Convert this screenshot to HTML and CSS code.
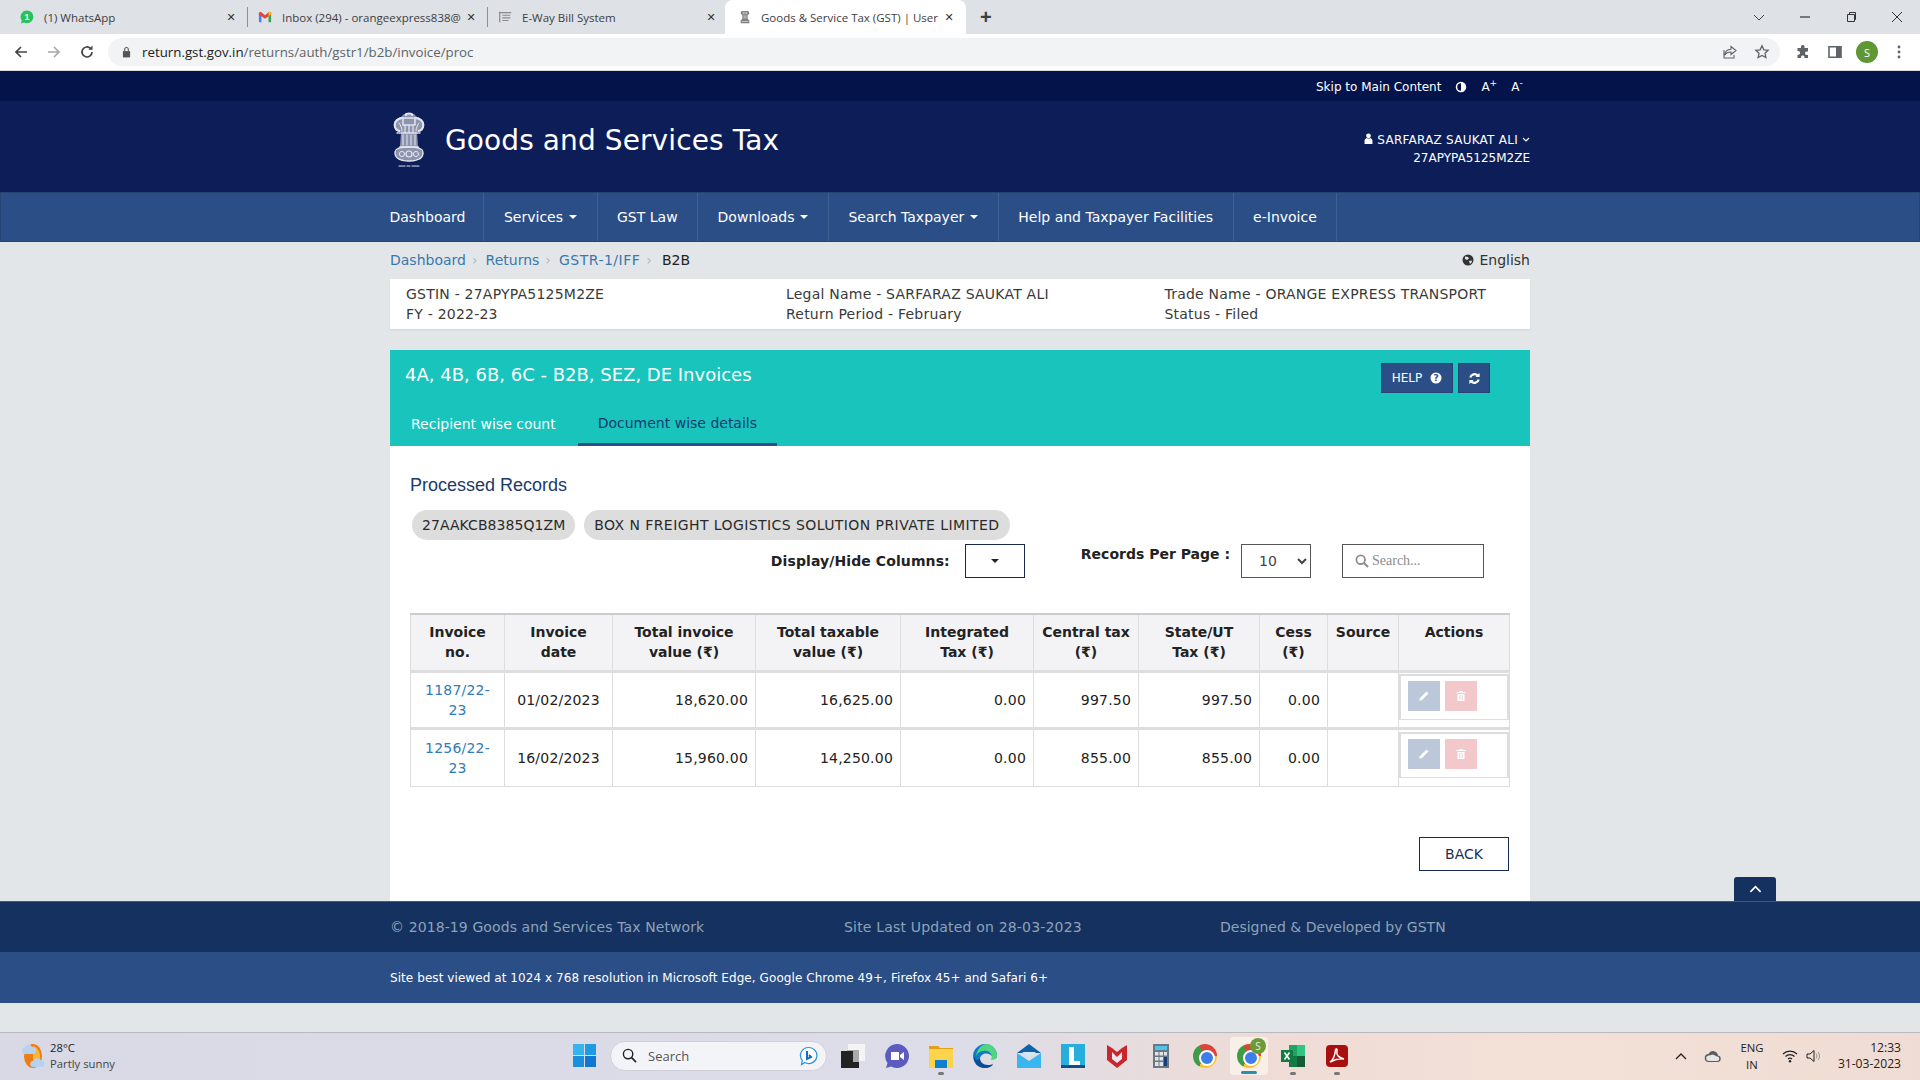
FILE: index.html
```html
<!DOCTYPE html>
<html lang="en">
<head>
<meta charset="utf-8">
<title>Goods &amp; Service Tax (GST) | User</title>
<link rel="stylesheet" href="styles.css">
</head>
<body>
<header class="tabstrip">
  <div class="tab tab-one">
    <svg class="fav" viewBox="0 0 16 16"><path fill="#25c45a" d="M8 .5a7.300 7.300 0 0 1 0 14.600c-1.300 0-2.400-.3-3.400-.8L1 15.500l1.100-3.400A7.300 7.300 0 0 1 8 .5z"/><text x="8" y="11.500" text-anchor="middle" class="fav-num">1</text></svg>
    <span class="tab-title">(1) WhatsApp</span><span class="tab-x">✕</span>
  </div>
  <i class="tab-sep"></i>
  <div class="tab">
    <svg class="fav" viewBox="0 0 16 16"><path fill="#4285f4" d="M1 3h3v11H2a1 1 0 0 1-1-1z"/><path fill="#34a853" d="M12 3h3v10a1 1 0 0 1-1 1h-2z"/><path fill="#ea4335" d="M1 3l2-1 5 4 5-4 2 1v2l-7 5-7-5z"/><path fill="#fbbc04" d="M13 2l2 1v2l-3 2V3z"/></svg>
    <span class="tab-title">Inbox (294) - orangeexpress838@</span><span class="tab-x">✕</span>
  </div>
  <i class="tab-sep"></i>
  <div class="tab">
    <svg class="fav" viewBox="0 0 16 16"><path stroke="#8a8a8a" stroke-width="1.400" d="M2 2v12M1 3h14M5 6h9M5 9h9M5 12h7" fill="none"/></svg>
    <span class="tab-title">E-Way Bill System</span><span class="tab-x">✕</span>
  </div>
  <div class="tab tab-active">
    <svg class="fav" viewBox="0 0 16 16"><path fill="#7d7d7d" d="M4 1h8l1 3-2 2v4l2 2v3H3v-3l2-2V6L3 4z"/><path stroke="#fff" stroke-width=".7" d="M6 2v3M8 2v3M10 2v3M7 6v4M9 6v4M4 13h8" fill="none"/></svg>
    <span class="tab-title">Goods &amp; Service Tax (GST) | User</span><span class="tab-x">✕</span>
  </div>
  <span class="newtab">+</span>
  <div class="winctl">
    <svg viewBox="0 0 12 12"><path d="M1 4l5 5 5-5" fill="none" stroke="#444" stroke-width="1"/></svg>
    <svg viewBox="0 0 12 12"><path d="M1 6h10" stroke="#333" stroke-width="1.200"/></svg>
    <svg viewBox="0 0 12 12"><path d="M2.500 3.500h7v7h-7zM4.500 3.500v-2h6v7h-1" fill="none" stroke="#333" stroke-width="1"/></svg>
    <svg viewBox="0 0 12 12"><path d="M1 1l10 10M11 1L1 11" stroke="#333" stroke-width="1"/></svg>
  </div>
</header>
<div class="toolbar">
  <svg class="nav-ico" viewBox="0 0 16 16"><path d="M14 8H3M8 3L3 8l5 5" fill="none" stroke="#444" stroke-width="1.700"/></svg>
  <svg class="nav-ico" viewBox="0 0 16 16"><path d="M2 8h11M8 3l5 5-5 5" fill="none" stroke="#a8a8a8" stroke-width="1.700"/></svg>
  <svg class="nav-ico" viewBox="0 0 16 16"><path d="M13 8a5 5 0 1 1-1.500-3.600" fill="none" stroke="#444" stroke-width="1.700"/><path d="M13.500 1.500v4.200H9.300z" fill="#444"/></svg>
  <div class="omnibox">
    <svg class="lock" viewBox="0 0 10 12"><path fill="#555" d="M1 5h8v7H1z"/><path d="M3 5V3a2 2 0 0 1 4 0v2" fill="none" stroke="#555" stroke-width="1.200"/></svg>
    <span class="url">return.gst.gov.in<span class="url-path">/returns/auth/gstr1/b2b/invoice/proc</span></span>
    <svg class="omni-ico omni-share" viewBox="0 0 16 16"><path d="M9 2.500l5 4-5 4V8C6 8 4 9 3 11c0-3 2-5.500 6-5.700zM2 6v8h10v-3" fill="none" stroke="#5f6368" stroke-width="1.100"/></svg>
    <svg class="omni-ico" viewBox="0 0 16 16"><path d="M8 1.800l1.900 4 4.300.5-3.200 3 .9 4.300L8 11.500l-3.900 2.100.9-4.300-3.200-3 4.300-.5z" fill="none" stroke="#5f6368" stroke-width="1.300"/></svg>
  </div>
  <svg class="tool-ico tool-first" viewBox="0 0 16 16"><path fill="#5f6368" d="M6 2.500a1.800 1.800 0 0 1 3.500 0V4H13v3.500h-1.200a1.800 1.800 0 0 0 0 3.600H13V14H9.500v-1a1.800 1.800 0 0 0-3.500 0v1H2.500v-3.300h.8a1.800 1.800 0 0 0 0-3.600h-.8V4H6z"/></svg>
  <svg class="tool-ico" viewBox="0 0 16 16"><path fill="none" stroke="#5f6368" stroke-width="1.600" d="M2 2.800h12v10.400H2z"/><path fill="#5f6368" d="M9 2.800h5v10.400H9z"/></svg>
  <span class="avatar">S</span>
  <svg class="tool-ico tool-menu" viewBox="0 0 16 16"><circle cx="8" cy="3" r="1.400" fill="#5f6368"/><circle cx="8" cy="8" r="1.400" fill="#5f6368"/><circle cx="8" cy="13" r="1.400" fill="#5f6368"/></svg>
</div>

<div class="topbar">
  <div class="wrap topbar-in">
    <span class="skip">Skip to Main Content</span>
    <svg class="contrast" viewBox="0 0 12 12"><circle cx="6" cy="6" r="4.500" fill="none" stroke="#fff" stroke-width="1.500"/><path fill="#fff" d="M6 1.500a4.500 4.500 0 0 1 0 9z"/></svg>
    <span class="a-size">A<sup>+</sup></span>
    <span class="a-size">A<sup>-</sup></span>
  </div>
</div>
<div class="masthead">
  <div class="wrap masthead-in">
    <svg class="emblem" viewBox="0 0 34 56">
      <path fill="#8d94ad" d="M12 2h10l3 3c5 1 7 6 6 10-1 3-3 5-6 5l1 14 5 7c0 6-7 8-14 8S3 47 3 41l5-7 1-14c-3 0-5-2-6-5-1-4 1-9 6-10z"/>
      <g fill="none" stroke="#e4e7ef" stroke-linecap="round">
        <path d="M14 3c-2-2 8-2 6 0" stroke-width="2"/>
        <path d="M10 6c-6 1-8 5-7 9 1 3 3 4 5 4" stroke-width="2.200" stroke-dasharray="1.500 1"/>
        <path d="M24 6c6 1 8 5 7 9-1 3-3 4-5 4" stroke-width="2.200" stroke-dasharray="1.500 1"/>
        <path d="M11 6h12v7H11z" stroke-width="1.600" stroke-dasharray="1.200 1"/>
        <path d="M7 11c2 3 3 5 3 8M27 11c-2 3-3 5-3 8" stroke-width="1"/>
        <path d="M13 14v7M17 14v7M21 14v7" stroke-width="1.300" stroke-dasharray="1.500 1"/>
        <path d="M5 21h24" stroke-width="1.300" stroke-dasharray="1 1"/>
        <path d="M11 23v10M15 23v10M19 23v10M23 23v10" stroke-width="1"/>
        <path d="M8 35h18" stroke-width="1.300"/>
        <path d="M3 41c0-4 4-6 14-6s14 2 14 6c0 6-7 8-14 8S3 47 3 41z" stroke-width="1.400" stroke-dasharray="2 1"/>
        <circle cx="10" cy="42" r="2.600" stroke-width="1"/><circle cx="17" cy="42" r="3" stroke-width="1.200"/><circle cx="24" cy="42" r="2.600" stroke-width="1"/>
        <path d="M7 54h6M15 54h3M20 54h7" stroke-width="1.100" stroke-dasharray="1.500 .8"/>
      </g>
    </svg>
    <h1 class="site-title">Goods and Services Tax</h1>
    <div class="user">
      <div class="user-name">
        <svg class="fa-user" viewBox="0 0 10 12"><circle cx="5" cy="3" r="2.600" fill="#fff"/><path fill="#fff" d="M.6 12V8.500C.6 6.800 2 6 3 5.500c1.200.8 2.800.8 4 0 1 .5 2.400 1.300 2.400 3V12z"/></svg>
        SARFARAZ SAUKAT ALI
        <svg class="chev" viewBox="0 0 8 6"><path d="M1 1l3 3 3-3" fill="none" stroke="#fff" stroke-width="1.200"/></svg>
      </div>
      <div class="user-id">27APYPA5125M2ZE</div>
    </div>
  </div>
</div>
<nav class="mainnav">
  <ul class="wrap nav-list">
    <li class="nav-first">Dashboard</li>
    <li>Services<i class="caret"></i></li>
    <li>GST Law</li>
    <li>Downloads<i class="caret"></i></li>
    <li>Search Taxpayer<i class="caret"></i></li>
    <li>Help and Taxpayer Facilities</li>
    <li>e-Invoice</li>
  </ul>
</nav>

<main class="wrap content">
  <div class="crumbs">
    <a>Dashboard</a><span class="crumb-sep">›</span>
    <a>Returns</a><span class="crumb-sep">›</span>
    <a class="crumb-wide">GSTR-1/IFF</a><span class="crumb-sep">›</span>
    <b class="crumb-now">B2B</b>
    <span class="lang">
      <svg class="globe" viewBox="0 0 12 12"><circle cx="6" cy="6" r="5.500" fill="#333"/><path fill="#e3e6e9" d="M3 2.500l3 .5 1 1.500L5 6 3 5zM7 7l2.500-.5.500 1.500-2 2z"/></svg>
      English
    </span>
  </div>
  <section class="info">
    <div class="info-col info-a"><div>GSTIN - 27APYPA5125M2ZE</div><div>FY - 2022-23</div></div>
    <div class="info-col info-b"><div>Legal Name - SARFARAZ SAUKAT ALI</div><div>Return Period - February</div></div>
    <div class="info-col"><div>Trade Name - ORANGE EXPRESS TRANSPORT</div><div>Status - Filed</div></div>
  </section>

  <section class="panel">
    <div class="panel-head">
      <div class="panel-top">
        <h2 class="panel-title">4A, 4B, 6B, 6C - B2B, SEZ, DE Invoices</h2>
        <button class="btn-dark btn-help">HELP
          <svg class="ico-q" viewBox="0 0 12 12"><circle cx="6" cy="6" r="5.500" fill="#fff"/><text x="6" y="9" text-anchor="middle" class="q-mark">?</text></svg>
        </button>
        <button class="btn-dark btn-refresh">
          <svg class="ico-r" viewBox="0 0 14 14"><path d="M2.500 6a4.700 4.700 0 0 1 8-2.200" fill="none" stroke="#fff" stroke-width="2.400"/><path fill="#fff" d="M12.500 1v4.500H8z"/><path d="M11.500 8a4.700 4.700 0 0 1-8 2.200" fill="none" stroke="#fff" stroke-width="2.400"/><path fill="#fff" d="M1.500 13V8.500H6z"/></svg>
        </button>
      </div>
      <div class="panel-tabs">
        <span class="ptab">Recipient wise count</span>
        <span class="ptab ptab-on">Document wise details</span>
      </div>
    </div>
    <div class="panel-body">
      <h3 class="records-title">Processed Records</h3>
      <div class="pills"><span class="pill">27AAKCB8385Q1ZM</span><span class="pill pill-wide">BOX N FREIGHT LOGISTICS SOLUTION PRIVATE LIMITED</span></div>
      <div class="controls">
        <label class="ctl-label ctl-display">Display/Hide Columns:</label>
        <button class="col-btn"><i class="caret caret-dark"></i></button>
        <label class="ctl-label ctl-records">Records Per Page :</label>
        <select class="per-page"><option>10</option></select>
        <div class="search">
          <svg class="ico-search" viewBox="0 0 14 14"><circle cx="5.700" cy="5.700" r="4.300" fill="none" stroke="#8f8f8f" stroke-width="1.800"/><path d="M9 9l4 4" stroke="#8f8f8f" stroke-width="2.200"/></svg>
          <input class="search-in" placeholder="Search...">
        </div>
      </div>
      <table class="grid">
        <colgroup>
          <col class="c1"><col class="c2"><col class="c3"><col class="c4"><col class="c5"><col class="c6"><col class="c7"><col class="c8"><col class="c9"><col class="c10">
        </colgroup>
        <thead>
          <tr><th>Invoice no.</th><th>Invoice date</th><th>Total invoice value (₹)</th><th>Total taxable value (₹)</th><th>Integrated<br>Tax (₹)</th><th>Central tax (₹)</th><th>State/UT<br>Tax (₹)</th><th>Cess (₹)</th><th>Source</th><th>Actions</th></tr>
        </thead>
        <tbody>
          <tr>
            <td class="ctr"><a class="inv">1187/22-23</a></td><td class="ctr">01/02/2023</td><td>18,620.00</td><td>16,625.00</td><td>0.00</td><td>997.50</td><td>997.50</td><td>0.00</td><td></td>
            <td class="act"><div class="act-box">
              <span class="act-btn act-edit"><svg viewBox="0 0 12 12"><path fill="#fff" d="M8.500 1.500l2 2-6.500 6.500-2.800.8.800-2.800z"/></svg></span>
              <span class="act-btn act-del"><svg viewBox="0 0 12 12"><path fill="#fff" d="M4.500 1h3l.5 1h2.500v1h-9V2H4zM2.500 4h7v7h-7z"/><path stroke="#f3c8cb" stroke-width=".6" d="M4.500 5v5M6 5v5M7.500 5v5"/></svg></span>
            </div></td>
          </tr>
          <tr>
            <td class="ctr"><a class="inv">1256/22-23</a></td><td class="ctr">16/02/2023</td><td>15,960.00</td><td>14,250.00</td><td>0.00</td><td>855.00</td><td>855.00</td><td>0.00</td><td></td>
            <td class="act"><div class="act-box">
              <span class="act-btn act-edit"><svg viewBox="0 0 12 12"><path fill="#fff" d="M8.500 1.500l2 2-6.500 6.500-2.800.8.800-2.800z"/></svg></span>
              <span class="act-btn act-del"><svg viewBox="0 0 12 12"><path fill="#fff" d="M4.500 1h3l.5 1h2.500v1h-9V2H4zM2.500 4h7v7h-7z"/><path stroke="#f3c8cb" stroke-width=".6" d="M4.500 5v5M6 5v5M7.500 5v5"/></svg></span>
            </div></td>
          </tr>
        </tbody>
      </table>
      <div class="back-row"><button class="btn-back">BACK</button></div>
    </div>
  </section>
  <button class="to-top"><svg viewBox="0 0 14 8"><path d="M1.500 7L7 1.500 12.500 7" fill="none" stroke="#fff" stroke-width="1.800"/></svg></button>
</main>

<footer class="foot-a"><div class="wrap foot-grid"><span class="foot-sp">© 2018-19 Goods and Services Tax Network</span><span class="foot-sp2">Site Last Updated on 28-03-2023</span><span>Designed &amp; Developed by GSTN</span></div></footer>
<div class="foot-b"><div class="wrap">Site best viewed at 1024 x 768 resolution in Microsoft Edge, Google Chrome 49+, Firefox 45+ and Safari 6+</div></div>
<div class="foot-gap"></div>

<div class="taskbar">
  <div class="weather">
    <svg class="wx" viewBox="0 0 26 28"><ellipse cx="14" cy="14" rx="9" ry="12" fill="#ec7d18"/><path fill="#f6b73c" d="M14 4a9 11 0 0 1 6 16l-6 1z"/><path fill="#b7d2f0" d="M5 12a3.500 3.500 0 0 1 .5-6.500A4 4 0 0 1 13 5a3.500 3.500 0 0 1 1 7zM14 25a3 3 0 0 1 .5-6 4 4 0 0 1 7.500-.5 3.300 3.300 0 0 1 1 6.500z"/></svg>
    <div class="wx-txt"><div>28°C</div><div class="wx-sub">Partly sunny</div></div>
  </div>
  <svg class="start" viewBox="0 0 23 23"><path fill="#35b4ee" d="M0 0h11v11H0z"/><path fill="#1e9be3" d="M12 0h11v11H12z"/><path fill="#1a90dc" d="M0 12h11v11H0z"/><path fill="#0f78cf" d="M12 12h11v11H12z"/></svg>
  <div class="tb-search">
    <svg class="tb-lens" viewBox="0 0 16 16"><circle cx="6.500" cy="6.500" r="5" fill="none" stroke="#222" stroke-width="1.500"/><path d="M10 10l5 5" stroke="#222" stroke-width="1.700"/></svg>
    <span>Search</span>
    <svg class="tb-bing" viewBox="0 0 20 20"><path d="M10 1.500a8 8 0 1 1-4 15l-3.500 2 .8-4A8 8 0 0 1 10 1.500z" fill="#fff" stroke="#2a8fe0" stroke-width="1.200"/><path d="M8 5v8l4-2-2-2" fill="none" stroke="#0f6fc6" stroke-width="2"/></svg>
  </div>
  <div class="tb-apps">
    <span class="app"><svg viewBox="0 0 24 24"><path fill="#f4f4f4" d="M7 0h17v17H7z"/><path fill="#aaa" d="M6 6h12v12H6z"/><path fill="#222" d="M0 7h12v17H0zM12 18h6v6h-6z"/></svg></span>
    <span class="app"><svg viewBox="0 0 24 24"><path fill="#5c5bc0" d="M12 0a12 12 0 1 1-6 22.400L1 24l1.500-5A12 12 0 0 1 12 0z"/><path fill="#fff" d="M6 8h8v8H6zM15 11l4-3v8l-4-3z"/></svg></span>
    <span class="app app-dot"><svg viewBox="0 0 24 24"><path fill="#e6a017" d="M0 2h9l2 2h13v4H0z"/><path fill="#fcd34d" d="M0 5h24v19H0z"/><path fill="#0f7fd0" d="M6 16h12v8H6z"/></svg></span>
    <span class="app"><svg viewBox="0 0 24 24"><path fill="#0f78c8" d="M12 0a12 12 0 1 0 8 21H12a6 6 0 0 1-5-7c1-4 7-7 12-2l5 2A12 12 0 0 0 12 0z"/><path fill="#4fd67f" d="M14 0c6 1 10 6 10 12 0 3-3 4-6 4 2-4 0-8-4-9-5-1-9 1-11 5C4 6 8 0 14 0z"/><path fill="#0a4f96" d="M7 14c0 4 3 7 8 7 2 0 4-.5 5.500-1.500A11 11 0 0 1 12 24C5 24 0 19 1 12c2 5 4 5 6 2z"/></svg></span>
    <span class="app"><svg viewBox="0 0 24 24"><path fill="#0f62a8" d="M12 0l12 9H0z"/><path fill="#38b6f0" d="M0 9l12 8 12-8v15H0z"/><path fill="#cfeafb" d="M5 8h14l-7 5z"/></svg></span>
    <span class="app"><svg viewBox="0 0 24 24"><path fill="#26afdc" d="M0 0h24v24H0z"/><path fill="#fff" d="M8 3h5v14h6v4H8z"/><path fill="#0d4f8a" d="M0 21h24v3H0z"/></svg></span>
    <span class="app"><svg viewBox="0 0 24 24"><path fill="#c8262c" d="M2 1l5 3 5 4 5-4 5-3v15l-10 8-10-8z"/><path fill="#e8e8ee" d="M7 8l5 5 5-5v7l-5 4-5-4z"/></svg></span>
    <span class="app"><svg viewBox="0 0 24 24"><path fill="#6b7782" d="M4 0h16v24H4z"/><path fill="#4fc5ee" d="M6 2h12v4H6z"/><path fill="#dfe4e8" d="M6 8h3.500v3.500H6zM10.500 8H14v3.500h-3.500zM15 8h3v3.500h-3zM6 13h3.500v3.500H6zM10.500 13H14v3.500h-3.500zM6 18h3.500v4H6zM10.500 18H14v4h-3.500z"/><path fill="#123f7c" d="M15 13h3v9h-3z"/></svg></span>
    <span class="app"><i class="chrome"></i></span>
    <span class="app app-active"><i class="chrome"></i><b class="chrome-badge">S</b></span>
    <span class="app app-dot"><svg viewBox="0 0 24 24"><path fill="#21a366" d="M8 1h16v22H8z"/><path fill="#107c41" d="M8 12h8v11H8z"/><path fill="#33c481" d="M16 1h8v11h-8z"/><path fill="#185c37" d="M16 12h8v11h-8z"/><path fill="#107c41" d="M0 6h12v12H0z"/><path stroke="#fff" stroke-width="1.600" d="M3.500 8.500l5 7M8.500 8.500l-5 7"/></svg></span>
    <span class="app app-dot"><svg viewBox="0 0 24 24"><rect x="1" y="1" width="22" height="22" rx="4" fill="#a80f0f"/><path d="M5 18c3-2 5-7 5.500-12 .3-2 2-1 1.500 1-1 4 2 7 7 8-4-.5-9 .5-14 3z" fill="none" stroke="#fff" stroke-width="1.500"/></svg></span>
  </div>
  <div class="tray">
    <svg class="tray-chev" viewBox="0 0 12 8"><path d="M1 7l5-5 5 5" fill="none" stroke="#222" stroke-width="1.300"/></svg>
    <svg class="tray-cloud" viewBox="0 0 18 14"><path fill="#5b5b5b" d="M5 13a4 4 0 0 1-.5-8 5 5 0 0 1 9.500 1.500 3.300 3.300 0 0 1 0 6.500z"/><path fill="#e6e6e6" d="M5 12a2.800 2.800 0 0 1 0-5.600l4-1 4 2a2.300 2.300 0 0 1 0 4.600z"/></svg>
    <div class="tray-lang"><div>ENG</div><div>IN</div></div>
    <svg class="tray-wifi" viewBox="0 0 16 14"><path d="M1 5a10 10 0 0 1 14 0M3.500 7.500a6.500 6.500 0 0 1 9 0M6 10a3 3 0 0 1 4 0" fill="none" stroke="#222" stroke-width="1.200"/><circle cx="8" cy="12.300" r="1.200" fill="#222"/></svg>
    <svg class="tray-vol" viewBox="0 0 16 14"><path d="M1 5h3l4-3.500v11L4 9H1z" fill="none" stroke="#222" stroke-width="1"/><path d="M10 4.500a3.500 3.500 0 0 1 0 5M12 3a6 6 0 0 1 0 8" fill="none" stroke="#999" stroke-width="1"/></svg>
    <div class="clock"><div>12:33</div><div>31-03-2023</div></div>
  </div>
</div>
</body>
</html>
```
FILE: styles.css
```css
* { box-sizing: border-box; }
html, body { margin: 0; padding: 0; }
body {
  width: 1920px; height: 1080px; overflow: hidden;
  display: flex; flex-direction: column;
  font-family: "DejaVu Sans", Verdana, sans-serif;
  font-size: 14px; color: #333; background: #e3e6e9;
}
h1, h2, h3 { margin: 0; font-weight: normal; }
ul { margin: 0; padding: 0; list-style: none; }
.wrap { width: 1140px; margin: 0 auto; }

/* browser chrome */
.tabstrip {
  height: 34px; flex: none; background: #dee1e6;
  display: flex; align-items: center;
  font-family: "Open Sans", sans-serif; font-size: 11.500px; color: #3c4043;
}
.tab { width: 239px; height: 34px; display: flex; align-items: center; padding: 0 10px; flex: none; }
.tab.tab-one { width: 247px; padding-left: 20px; }
.tab.tab-active { background: #fff; border-radius: 8px 8px 0 0; width: 241px; margin-left: -2px; padding: 0 11px 0 13px; }
.tab-sep { width: 1px; height: 20px; background: #8e9196; flex: none; }
.fav { width: 14px; height: 14px; flex: none; margin-right: 10px; }
.tab-active .fav { margin-right: 9px; }
.fav-num { font-family: "Liberation Sans", sans-serif; font-size: 10px; font-weight: 700; fill: #fff; }
.tab-title { flex: 1; min-width: 0; white-space: nowrap; overflow: hidden; }
.tab-x { width: 12px; font-size: 11px; color: #333; flex: none; margin-left: 4px; text-align: center; font-family: "DejaVu Sans", sans-serif; font-weight: 700; }
.newtab { font-size: 20px; line-height: 24px; margin-left: 14px; color: #3c4043; font-weight: 700; font-family: "Liberation Sans", sans-serif; }
.winctl { margin-left: auto; display: flex; gap: 34px; padding-right: 17px; }
.winctl svg { width: 12px; height: 12px; }

.toolbar { height: 37px; flex: none; background: #fff; display: flex; align-items: center; padding: 0 14px 0 13px; border-bottom: 1px solid #d9dbde; }
.nav-ico { width: 16px; height: 16px; margin-right: 17px; flex: none; }
.nav-ico:nth-child(3) { margin-right: 13px; }
.omnibox { width: 1672px; height: 28px; background: #f1f3f4; border-radius: 14px; display: flex; align-items: center; padding: 0 10px 0 14px; flex: none; }
.lock { width: 9px; height: 12px; margin-right: 11px; }
.url { font-family: "Open Sans", sans-serif; font-size: 13.300px; color: #202124; }
.url-path { color: #5f6368; }
.omni-ico { width: 16px; height: 16px; margin-left: 16px; flex: none; }
.omni-share { margin-left: auto; }
.tool-ico { width: 16px; height: 16px; flex: none; margin-left: 16px; }
.tool-first { margin-left: 15px; }
.avatar { width: 22px; height: 22px; border-radius: 50%; background: #5e9733; color: #fff; font-size: 11px; display: flex; align-items: center; justify-content: center; margin-left: 13px; flex: none; font-family: "Open Sans", sans-serif; }
.tool-menu { margin-left: 13px; }

/* site header */
.topbar { height: 30px; flex: none; background: #04144a; color: #fff; font-size: 12px; }
.topbar-in { height: 30px; display: flex; align-items: center; padding: 1px 0 0 926px; white-space: nowrap; }
.skip { flex: none; }
.contrast { width: 12px; height: 12px; margin: 0 14px; flex: none; }
.a-size { margin-right: 14px; flex: none; }
.a-size:last-child { margin-right: 0; }
.a-size sup { font-size: 9px; line-height: 0; }
.masthead { height: 91px; flex: none; background: #0d1d58; color: #fff; }
.masthead-in { height: 91px; display: flex; align-items: flex-start; padding: 11px 0 0 2px; }
.emblem { width: 34px; height: 56px; flex: none; }
.site-title { font-size: 28px; line-height: 40px; margin: 9px 0 0 19px; letter-spacing: .1px; }
.user { margin-left: auto; margin-top: 19px; text-align: right; font-size: 12px; line-height: 18px; }
.user-name { letter-spacing: .25px; }
.fa-user { width: 9px; height: 11px; }
.chev { width: 8px; height: 6px; vertical-align: 1px; }
.mainnav { height: 50px; flex: none; background: #2c4e86; border: 1px solid #254373; color: #fff; }
.nav-list { display: flex; height: 48px; position: relative; left: -0.5px; }
.nav-list li { display: flex; align-items: center; padding: 0 19.500px; border-right: 1px solid #3f5f92; white-space: nowrap; }
.nav-list .nav-first { padding: 0 18px 0 0; }
.caret { display: inline-block; width: 0; height: 0; border: 4px solid transparent; border-top-color: #fff; border-bottom-width: 0; margin-left: 6px; }
.caret-dark { border-top-color: #222; margin: 0; }

/* content */
.content { flex: 1; display: flex; flex-direction: column; position: relative; min-height: 0; }
.crumbs { height: 37px; flex: none; display: flex; align-items: center; color: #3a77ad; padding-bottom: 2px; }
.crumb-sep { color: #b4b8bc; margin: 0 8px 0 6px; }
.crumb-wide { letter-spacing: .5px; }
.crumb-now { font-weight: normal; color: #222; margin-left: 2px; }
.lang { margin-left: auto; color: #333; display: flex; align-items: center; }
.globe { width: 12px; height: 12px; margin-right: 5px; }
.info { height: 50px; flex: none; background: #fff; display: flex; padding: 5px 16px; line-height: 20px; box-shadow: 0 1px 2px #cfd2d5; color: #3a3a3a; letter-spacing: .22px; }
.info-col { white-space: nowrap; }
.info-a { width: 380px; }
.info-b { width: 378.500px; }
.panel { margin-top: 21px; flex: 1; display: flex; flex-direction: column; background: #fff; }
.panel-head { height: 96px; background: #18c4bc; flex: none; position: relative; display: flex; flex-direction: column; }
.panel-top { display: flex; align-items: flex-start; padding: 13px 40px 0 15px; }
.panel-title { font-size: 18px; color: #fff; line-height: 24px; flex: 1; font-weight: 500; }
.btn-dark { background: #2c4e86; border: 1px solid #254373; color: #fff; height: 30px; padding: 0; font-family: inherit; display: flex; align-items: center; justify-content: center; }
.btn-help { width: 72px; font-size: 12px; gap: 8px; }
.btn-refresh { width: 32px; margin-left: 5px; }
.ico-q { width: 12px; height: 12px; }
.q-mark { font-family: "DejaVu Sans", sans-serif; font-size: 9px; font-weight: 700; fill: #2c4e86; }
.ico-r { width: 13px; height: 13px; }
.panel-tabs { margin-top: auto; display: flex; padding-left: 1px; gap: 2px; height: 41px; }
.ptab { padding: 0 20px 3px; color: #fff; display: flex; align-items: center; height: 41px; }
.ptab-on { color: #14396f; border-bottom: 3px solid #2c4e86; padding-bottom: 2px; }
.panel-body { flex: 1; padding: 29px 21px 0 20px; }
.records-title { font-family: "Liberation Sans", sans-serif; font-size: 18px; line-height: 20px; color: #1b3a6b; }
.pills { display: flex; gap: 9px; margin-top: 15px; padding-left: 2px; }
.pill { height: 30px; padding: 0 10px; display: flex; align-items: center; background: #ddd; border-radius: 15px; color: #2a2a2a; white-space: nowrap; letter-spacing: .06px; }
.pill-wide { letter-spacing: .42px; }
.controls { display: flex; align-items: center; justify-content: flex-end; height: 34px; margin-top: 4px; padding-right: 25px; }
.ctl-label { font-weight: 700; color: #222; white-space: nowrap; }
.ctl-display { letter-spacing: .1px; }
.col-btn { width: 60px; height: 34px; margin-left: 15px; background: #fff; border: 1px solid #17294d; display: flex; align-items: center; justify-content: center; padding: 0; }
.ctl-records { margin-left: 56px; align-self: flex-start; line-height: 20px; }
.per-page { width: 70px; height: 34px; margin-left: 11px; background: #fff; border: 1px solid #555; border-radius: 0; padding-left: 13px; font-family: inherit; font-size: 14px; color: #444; }
.search { width: 142px; height: 34px; margin-left: 31px; border: 1px solid #555; display: flex; align-items: center; padding-left: 12px; background: #fff; }
.ico-search { width: 14px; height: 14px; flex: none; }
.search-in { border: 0; outline: 0; width: 110px; font-family: "Liberation Serif", serif; font-size: 14px; padding: 0 0 0 3px; background: transparent; }
.search-in::placeholder { color: #8c8c8c; }

.grid { width: 1099px; margin-top: 35px; border-collapse: collapse; table-layout: fixed; }
.c1 { width: 94px; } .c2 { width: 108px; } .c3 { width: 143px; } .c4 { width: 145px; } .c5 { width: 133px; }
.c6 { width: 105px; } .c7 { width: 121px; } .c8 { width: 68px; } .c9 { width: 71px; } .c10 { width: 111px; }
.grid th { height: 57px; background: #f3f3f6; border: 1px solid #ddd; border-top: 2px solid #ccc; border-bottom: 3px solid #ddd; font-weight: 700; color: #222; vertical-align: top; padding: 7px 6px 0; line-height: 20px; }
.grid td { height: 57px; border: 1px solid #ddd; text-align: right; padding: 0 7px; line-height: 20px; color: #222; letter-spacing: .2px; }
.grid tbody tr + tr td { border-top: 3px solid #ddd; height: 58px; }
.grid td.ctr { text-align: center; }
.grid td.act { padding: 0; vertical-align: top; }
.inv { color: #337ab7; }
.act-box { height: 46px; border: 2px solid #ddd; border-bottom-width: 1px; display: flex; gap: 5px; padding: 5px 0 0 7px; margin: 1px 0 0; }
.grid tbody tr + tr .act-box { margin-top: 2px; }
.act-btn { width: 32px; height: 30px; display: flex; align-items: center; justify-content: center; }
.act-btn svg { width: 12px; height: 12px; }
.act-edit { background: #bcc8da; }
.act-del { background: #f3c8cb; }
.back-row { display: flex; justify-content: flex-end; margin-top: 50px; }
.btn-back { width: 90px; height: 34px; background: #fff; border: 1px solid #17294d; font-family: inherit; font-size: 14px; color: #1d2d4f; padding: 0; }
.to-top { position: absolute; left: 1344px; bottom: 0; width: 42px; height: 24px; padding: 0; border: 0; border-radius: 3px 3px 0 0; background: #15315f; display: flex; align-items: center; justify-content: center; }
.to-top svg { width: 13px; height: 8px; }

/* footers */
.foot-a { height: 51px; flex: none; background: #15315f; border-top: 1px solid #44597c; color: #8ea3b8; }
.foot-grid { height: 50px; display: grid; grid-template-columns: 454px 376px 1fr; align-items: center; white-space: nowrap; padding-bottom: 1px; }
.foot-sp { letter-spacing: .1px; }
.foot-sp2 { letter-spacing: .18px; }
.foot-b { height: 51px; flex: none; background: #2c4e86; color: #fff; font-size: 12px; display: flex; align-items: center; letter-spacing: .07px; }
.foot-gap { height: 29px; flex: none; }

/* taskbar */
.taskbar {
  height: 48px; flex: none; display: flex; align-items: center; padding: 0 0 2px 19px;
  border-top: 1px solid #b8b9c0;
  background: linear-gradient(90deg, #d8d9e5 0, #dcdde8 50%, #efdcd6 66%, #f3e0d6 80%, #efdcd4 100%);
  font-family: "Open Sans", sans-serif; font-size: 11.300px; color: #222;
}
.weather { width: 554px; display: flex; align-items: center; flex: none; }
.wx { width: 26px; height: 28px; flex: none; }
.wx-txt { margin-left: 5px; line-height: 16px; }
.wx-sub { color: #444; }
.start { width: 23px; height: 23px; flex: none; }
.tb-search { width: 217px; height: 30px; margin-left: 14px; background: #f3f4f8; border-radius: 15px; border: 1px solid #d0d1da; display: flex; align-items: center; padding: 0 7px 0 11px; flex: none; font-size: 13px; color: #555; }
.tb-lens { width: 15px; height: 15px; margin-right: 11px; }
.tb-bing { width: 20px; height: 20px; margin-left: auto; }
.tb-apps { display: flex; margin-left: 4px; flex: none; }
.app { width: 44px; height: 38px; display: flex; align-items: center; justify-content: center; position: relative; }
.app svg { width: 24px; height: 24px; }
.app-dot::after { content: ""; position: absolute; bottom: 0; left: 19px; width: 6px; height: 3px; border-radius: 2px; background: #777; }
.app-active { background: #f8efe9; border-radius: 4px; width: 38px; margin: 0 3px; }
.app-active::after { content: ""; position: absolute; bottom: 1px; left: 11px; width: 16px; height: 3px; border-radius: 2px; background: #2f8ea3; }
.chrome { width: 24px; height: 24px; border-radius: 50%; display: block; position: relative; background: conic-gradient(from 330deg, #db4437 0 120deg, #fbc02d 120deg 240deg, #3f9b46 240deg 360deg); }
.chrome::after { content: ""; position: absolute; left: 6px; top: 6px; width: 12px; height: 12px; border-radius: 50%; background: #3f7de8; border: 2px solid #fff; }
.chrome-badge { position: absolute; left: 20px; top: 1px; width: 16px; height: 16px; border-radius: 50%; background: #6c9a3a; color: #e8f0da; font-size: 10px; font-weight: 400; display: flex; align-items: center; justify-content: center; }
.tray { margin-left: auto; display: flex; align-items: center; padding-right: 19px; flex: none; }
.tray-chev { width: 12px; height: 8px; }
.tray-cloud { width: 18px; height: 14px; margin-left: 17px; }
.tray-lang { margin-left: 18px; text-align: center; line-height: 17px; width: 24px; }
.tray-wifi { width: 16px; height: 14px; margin-left: 18px; }
.tray-vol { width: 16px; height: 14px; margin-left: 8px; }
.clock { margin-left: 16px; text-align: right; line-height: 16px; font-size: 12.100px; }
```
